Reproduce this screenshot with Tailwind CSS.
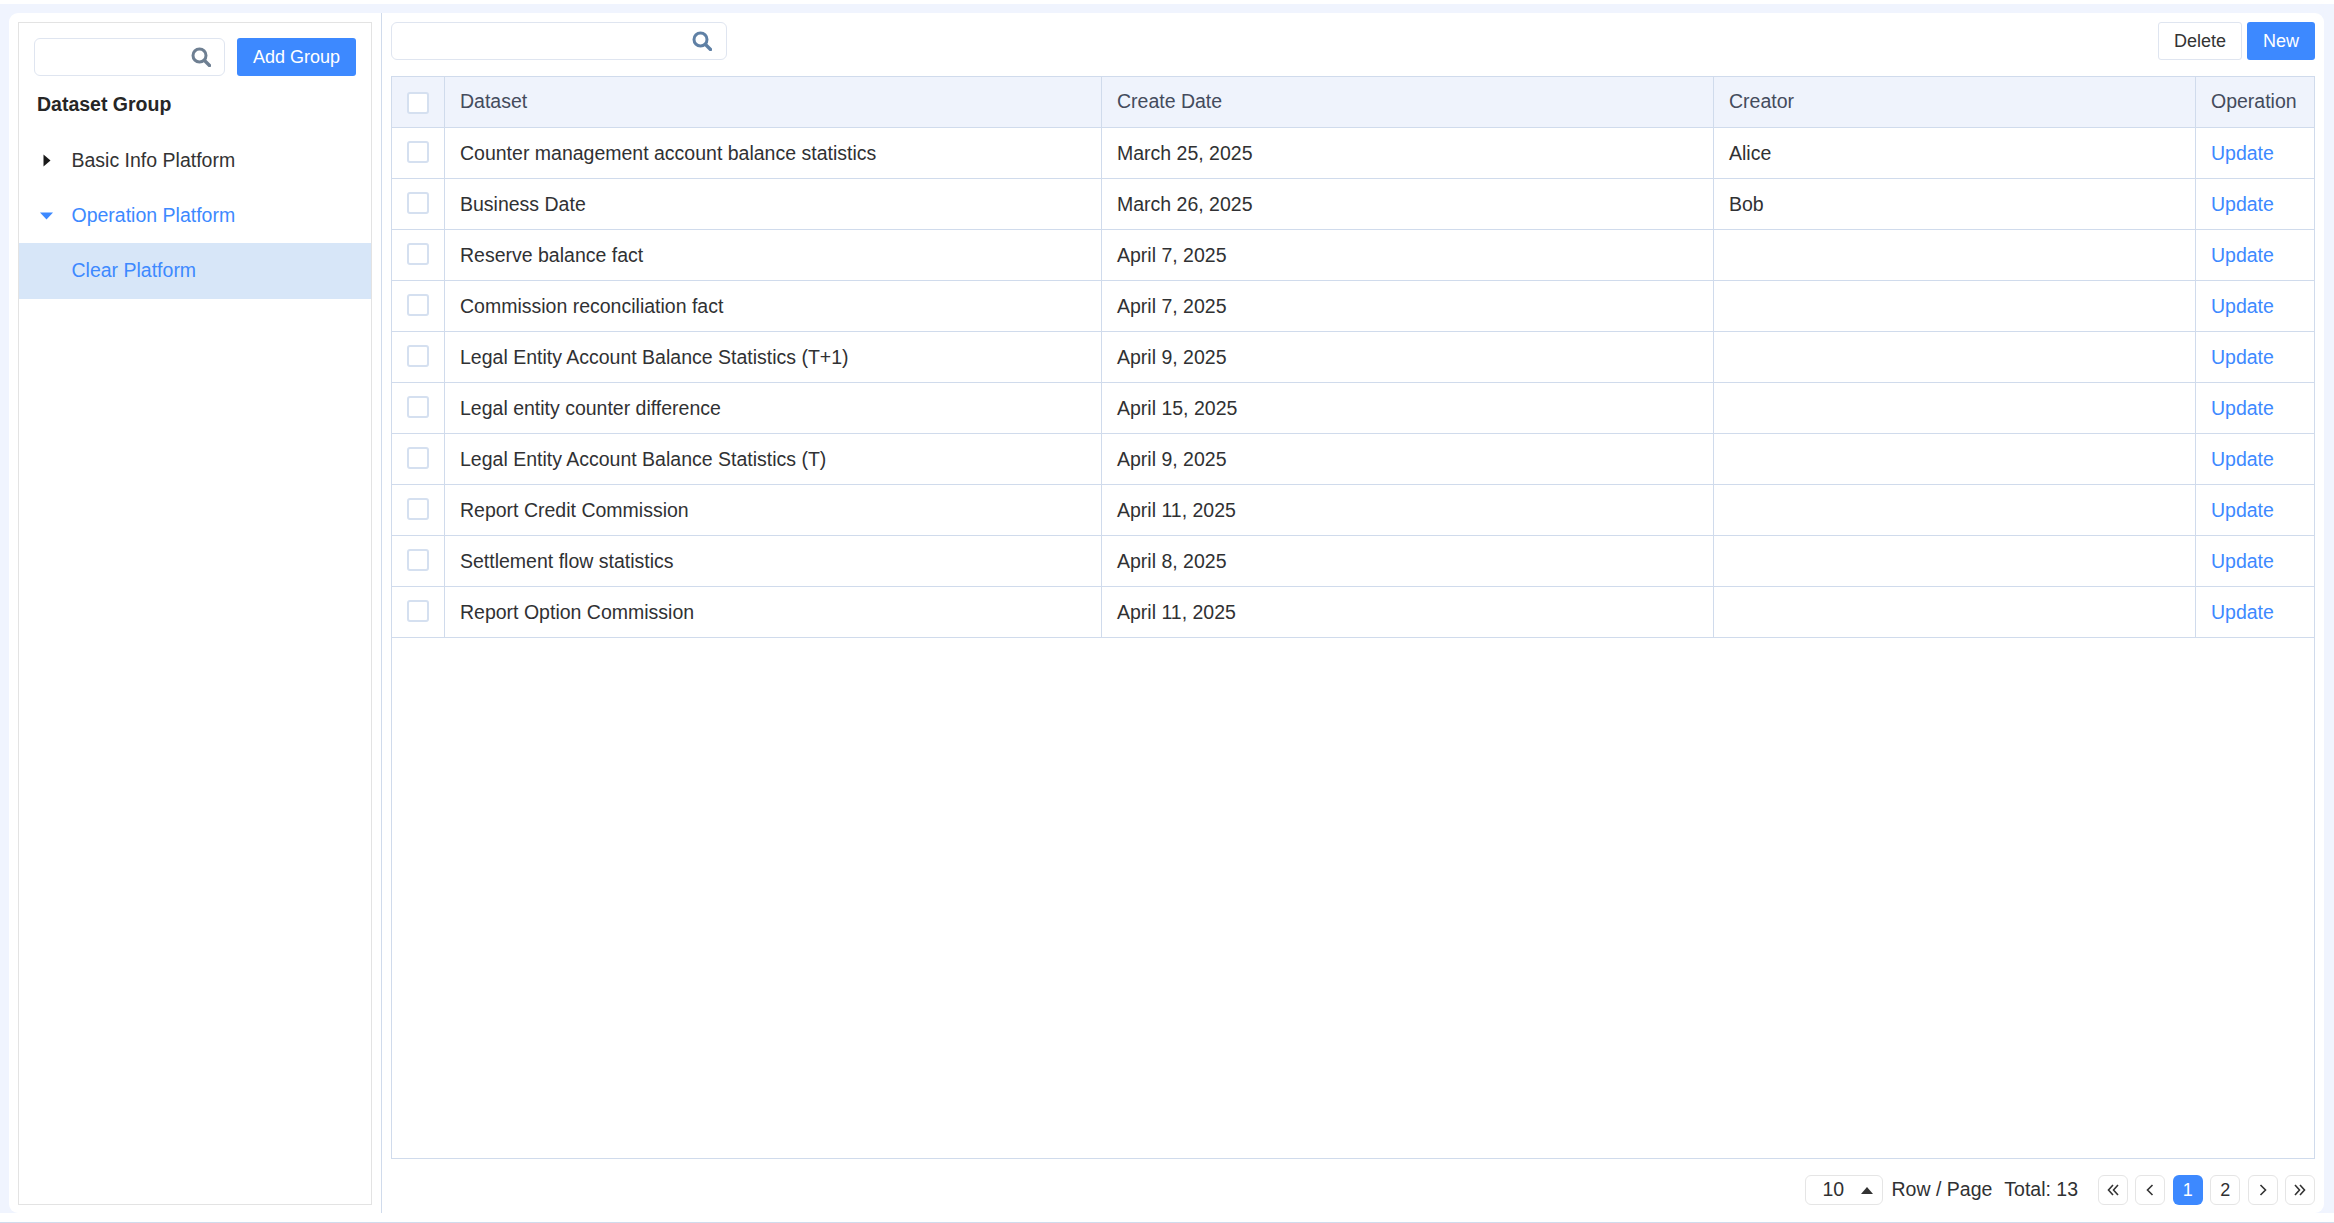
<!DOCTYPE html>
<html lang="en">

<head>
    <meta charset="UTF-8">
    <title>Dataset Group</title>
    <script src="https://cdn.jsdelivr.net/npm/@tailwindcss/browser@4"></script>
</head>

<body class="h-[1223px] overflow-hidden bg-white [font-family:'Liberation_Sans',Arial,sans-serif] text-[19.5px] text-[#303133]">
    <div class="h-[1223px] pt-[4px] border-b border-[#d0dbec]">
        <div class="h-[1209px] bg-[#f0f4fe] pt-[9px] pl-[9px] pr-[10px]">
            <div class="flex h-[1200px] bg-white rounded-[9px]">

                <!-- Left tree -->
                <div class="w-[373px] shrink-0 pt-[9px] pb-[8px] pl-[9px] pr-[9px] border-r border-[#d0dbec]">
                    <div class="h-full border border-[#e3e3e3] pt-[15px]">
                        <div class="flex gap-[12px] pl-[15px]">
                            <div class="w-[191px] h-[38px] border border-[#dfe5f0] rounded-[6px] flex items-center justify-end pr-[13px]">
                                <svg class="w-[20px] h-[20px] text-[#6e7f92]" viewBox="0 0 20 20" fill="none" stroke="currentColor">
                                    <circle cx="8.5" cy="8.5" r="6.5" stroke-width="3" />
                                    <path d="M13.5 13.5 L18.5 18.5" stroke-width="3.4" stroke-linecap="round" />
                                </svg>
                            </div>
                            <button class="w-[119px] h-[38px] bg-[#3d89ff] text-white text-[18px] rounded-[3px]">Add Group</button>
                        </div>
                        <div class="h-[57px] flex items-center pl-[18px] font-bold text-[19.5px] text-[#262626]">Dataset Group</div>

                        <div class="h-[55px] flex items-center pl-[24px] text-[#333]">
                            <svg class="w-[8px] h-[13px]" viewBox="0 0 8 13"><path d="M0.5 0.5 L7.5 6.5 L0.5 12.5 Z" fill="#1a1a1a" /></svg>
                            <span class="ml-[20.5px]">Basic Info Platform</span>
                        </div>
                        <div class="h-[55px] flex items-center pl-[21px] text-[#3d89ff]">
                            <svg class="w-[13px] h-[8px]" viewBox="0 0 13 8"><path d="M0 0.5 L13 0.5 L6.5 7.5 Z" fill="#3d89ff" /></svg>
                            <span class="ml-[18.5px]">Operation Platform</span>
                        </div>
                        <div class="h-[56px] flex items-center pl-[52.5px] bg-[#d7e6f8] text-[#3d89ff]">Clear Platform</div>
                    </div>
                </div>

                <!-- Right content -->
                <div class="flex-1 min-w-0 px-[9px] pt-[9px]">
                    <div class="flex justify-between h-[38px]">
                        <div class="w-[336px] h-[38px] border border-[#dfe5f0] rounded-[6px] flex items-center justify-end pr-[14px]">
                            <svg class="w-[20px] h-[20px] text-[#5f80a5]" viewBox="0 0 20 20" fill="none" stroke="currentColor">
                                <circle cx="8.5" cy="8.5" r="6.5" stroke-width="3" />
                                <path d="M13.5 13.5 L18.5 18.5" stroke-width="3.4" stroke-linecap="round" />
                            </svg>
                        </div>
                        <div class="flex gap-[5px]">
                            <button class="w-[84px] h-[38px] bg-white border border-[#dfe5f0] rounded-[3px] text-[18px] text-[#333]">Delete</button>
                            <button class="w-[68px] h-[38px] bg-[#3d89ff] rounded-[3px] text-[18px] text-white">New</button>
                        </div>
                    </div>

                    <div class="mt-[16px] h-[1083px] border border-[#d0dbec]">
                        <table class="w-full table-fixed border-separate border-spacing-0" id="dataset-table">
                            <colgroup>
                                <col class="w-[53px]">
                                <col class="w-[657px]">
                                <col class="w-[612px]">
                                <col class="w-[482px]">
                                <col class="w-[118px]">
                            </colgroup>
                            <thead class="bg-[#eff3fc] text-[#444b5c] text-left">
                                <tr class="h-[51px]">
                                    <th class="font-normal border-b border-r border-[#d0dbec] pl-[15px] pt-[2px]"><span class="block w-[22px] h-[22px] bg-white border-2 border-[#d5e0f0] rounded-[3px]"></span></th>
                                    <th class="font-normal border-b border-r border-[#d0dbec] pl-[15px] pb-[1px]">Dataset</th>
                                    <th class="font-normal border-b border-r border-[#d0dbec] pl-[15px] pb-[1px]">Create Date</th>
                                    <th class="font-normal border-b border-r border-[#d0dbec] pl-[15px] pb-[1px]">Creator</th>
                                    <th class="font-normal border-b border-[#d0dbec] pl-[15px] pb-[1px]">Operation</th>
                                </tr>
                            </thead>
                            <tbody>
                                <tr class="h-[51px]">
                                    <td class="border-b border-r border-[#d0dbec] pl-[15px] pb-[3px]"><span class="block w-[22px] h-[22px] border-2 border-[#d5e0f0] rounded-[3px]"></span></td>
                                    <td class="border-b border-r border-[#d0dbec] pl-[15px] pt-[2px]">Counter management account balance statistics</td>
                                    <td class="border-b border-r border-[#d0dbec] pl-[15px] pt-[2px]">March 25, 2025</td>
                                    <td class="border-b border-r border-[#d0dbec] pl-[15px] pt-[2px]">Alice</td>
                                    <td class="border-b border-[#d0dbec] pl-[15px] pt-[2px] text-[#3d89ff]">Update</td>
                                </tr>
                                <tr class="h-[51px]">
                                    <td class="border-b border-r border-[#d0dbec] pl-[15px] pb-[3px]"><span class="block w-[22px] h-[22px] border-2 border-[#d5e0f0] rounded-[3px]"></span></td>
                                    <td class="border-b border-r border-[#d0dbec] pl-[15px] pt-[2px]">Business Date</td>
                                    <td class="border-b border-r border-[#d0dbec] pl-[15px] pt-[2px]">March 26, 2025</td>
                                    <td class="border-b border-r border-[#d0dbec] pl-[15px] pt-[2px]">Bob</td>
                                    <td class="border-b border-[#d0dbec] pl-[15px] pt-[2px] text-[#3d89ff]">Update</td>
                                </tr>
                                <tr class="h-[51px]">
                                    <td class="border-b border-r border-[#d0dbec] pl-[15px] pb-[3px]"><span class="block w-[22px] h-[22px] border-2 border-[#d5e0f0] rounded-[3px]"></span></td>
                                    <td class="border-b border-r border-[#d0dbec] pl-[15px] pt-[2px]">Reserve balance fact</td>
                                    <td class="border-b border-r border-[#d0dbec] pl-[15px] pt-[2px]">April 7, 2025</td>
                                    <td class="border-b border-r border-[#d0dbec] pl-[15px] pt-[2px]"></td>
                                    <td class="border-b border-[#d0dbec] pl-[15px] pt-[2px] text-[#3d89ff]">Update</td>
                                </tr>
                                <tr class="h-[51px]">
                                    <td class="border-b border-r border-[#d0dbec] pl-[15px] pb-[3px]"><span class="block w-[22px] h-[22px] border-2 border-[#d5e0f0] rounded-[3px]"></span></td>
                                    <td class="border-b border-r border-[#d0dbec] pl-[15px] pt-[2px]">Commission reconciliation fact</td>
                                    <td class="border-b border-r border-[#d0dbec] pl-[15px] pt-[2px]">April 7, 2025</td>
                                    <td class="border-b border-r border-[#d0dbec] pl-[15px] pt-[2px]"></td>
                                    <td class="border-b border-[#d0dbec] pl-[15px] pt-[2px] text-[#3d89ff]">Update</td>
                                </tr>
                                <tr class="h-[51px]">
                                    <td class="border-b border-r border-[#d0dbec] pl-[15px] pb-[3px]"><span class="block w-[22px] h-[22px] border-2 border-[#d5e0f0] rounded-[3px]"></span></td>
                                    <td class="border-b border-r border-[#d0dbec] pl-[15px] pt-[2px]">Legal Entity Account Balance Statistics (T+1)</td>
                                    <td class="border-b border-r border-[#d0dbec] pl-[15px] pt-[2px]">April 9, 2025</td>
                                    <td class="border-b border-r border-[#d0dbec] pl-[15px] pt-[2px]"></td>
                                    <td class="border-b border-[#d0dbec] pl-[15px] pt-[2px] text-[#3d89ff]">Update</td>
                                </tr>
                                <tr class="h-[51px]">
                                    <td class="border-b border-r border-[#d0dbec] pl-[15px] pb-[3px]"><span class="block w-[22px] h-[22px] border-2 border-[#d5e0f0] rounded-[3px]"></span></td>
                                    <td class="border-b border-r border-[#d0dbec] pl-[15px] pt-[2px]">Legal entity counter difference</td>
                                    <td class="border-b border-r border-[#d0dbec] pl-[15px] pt-[2px]">April 15, 2025</td>
                                    <td class="border-b border-r border-[#d0dbec] pl-[15px] pt-[2px]"></td>
                                    <td class="border-b border-[#d0dbec] pl-[15px] pt-[2px] text-[#3d89ff]">Update</td>
                                </tr>
                                <tr class="h-[51px]">
                                    <td class="border-b border-r border-[#d0dbec] pl-[15px] pb-[3px]"><span class="block w-[22px] h-[22px] border-2 border-[#d5e0f0] rounded-[3px]"></span></td>
                                    <td class="border-b border-r border-[#d0dbec] pl-[15px] pt-[2px]">Legal Entity Account Balance Statistics (T)</td>
                                    <td class="border-b border-r border-[#d0dbec] pl-[15px] pt-[2px]">April 9, 2025</td>
                                    <td class="border-b border-r border-[#d0dbec] pl-[15px] pt-[2px]"></td>
                                    <td class="border-b border-[#d0dbec] pl-[15px] pt-[2px] text-[#3d89ff]">Update</td>
                                </tr>
                                <tr class="h-[51px]">
                                    <td class="border-b border-r border-[#d0dbec] pl-[15px] pb-[3px]"><span class="block w-[22px] h-[22px] border-2 border-[#d5e0f0] rounded-[3px]"></span></td>
                                    <td class="border-b border-r border-[#d0dbec] pl-[15px] pt-[2px]">Report Credit Commission</td>
                                    <td class="border-b border-r border-[#d0dbec] pl-[15px] pt-[2px]">April 11, 2025</td>
                                    <td class="border-b border-r border-[#d0dbec] pl-[15px] pt-[2px]"></td>
                                    <td class="border-b border-[#d0dbec] pl-[15px] pt-[2px] text-[#3d89ff]">Update</td>
                                </tr>
                                <tr class="h-[51px]">
                                    <td class="border-b border-r border-[#d0dbec] pl-[15px] pb-[3px]"><span class="block w-[22px] h-[22px] border-2 border-[#d5e0f0] rounded-[3px]"></span></td>
                                    <td class="border-b border-r border-[#d0dbec] pl-[15px] pt-[2px]">Settlement flow statistics</td>
                                    <td class="border-b border-r border-[#d0dbec] pl-[15px] pt-[2px]">April 8, 2025</td>
                                    <td class="border-b border-r border-[#d0dbec] pl-[15px] pt-[2px]"></td>
                                    <td class="border-b border-[#d0dbec] pl-[15px] pt-[2px] text-[#3d89ff]">Update</td>
                                </tr>
                                <tr class="h-[51px]">
                                    <td class="border-b border-r border-[#d0dbec] pl-[15px] pb-[3px]"><span class="block w-[22px] h-[22px] border-2 border-[#d5e0f0] rounded-[3px]"></span></td>
                                    <td class="border-b border-r border-[#d0dbec] pl-[15px] pt-[2px]">Report Option Commission</td>
                                    <td class="border-b border-r border-[#d0dbec] pl-[15px] pt-[2px]">April 11, 2025</td>
                                    <td class="border-b border-r border-[#d0dbec] pl-[15px] pt-[2px]"></td>
                                    <td class="border-b border-[#d0dbec] pl-[15px] pt-[2px] text-[#3d89ff]">Update</td>
                                </tr>
                            </tbody>
                        </table>
                    </div>

                    <!-- Pagination -->
                    <div class="mt-[16px] flex justify-end items-center h-[30px]">
                        <div class="w-[78px] h-[30px] border border-[#e5e5e5] rounded-[6px] flex items-center pl-[17px]">
                            <span>10</span>
                            <svg class="ml-[17px] w-[12px] h-[7px]" viewBox="0 0 12 7"><path d="M0 7 L6 0 L12 7 Z" fill="#333" /></svg>
                        </div>
                        <span class="ml-[9px]">Row / Page</span>
                        <span class="ml-[12px]">Total: 13</span>
                        <div class="ml-[20px] flex gap-[7.4px] text-[18px]">
                            <button class="w-[30px] h-[30px] border border-[#e5e5e5] rounded-[6px] flex items-center justify-center">
                                <svg class="w-[12px] h-[12px]" viewBox="0 0 12 12" fill="none" stroke="#333" stroke-width="1.6"><path d="M6 1 L1.5 6 L6 11 M11 1 L6.5 6 L11 11" /></svg>
                            </button>
                            <button class="w-[30px] h-[30px] border border-[#e5e5e5] rounded-[6px] flex items-center justify-center">
                                <svg class="w-[12px] h-[12px]" viewBox="0 0 12 12" fill="none" stroke="#333" stroke-width="1.6"><path d="M8.5 1 L3.5 6 L8.5 11" /></svg>
                            </button>
                            <button class="w-[30px] h-[30px] bg-[#3d89ff] text-white rounded-[6px]">1</button>
                            <button class="w-[30px] h-[30px] border border-[#e5e5e5] rounded-[6px]">2</button>
                            <button class="w-[30px] h-[30px] border border-[#e5e5e5] rounded-[6px] flex items-center justify-center">
                                <svg class="w-[12px] h-[12px]" viewBox="0 0 12 12" fill="none" stroke="#333" stroke-width="1.6"><path d="M3.5 1 L8.5 6 L3.5 11" /></svg>
                            </button>
                            <button class="w-[30px] h-[30px] border border-[#e5e5e5] rounded-[6px] flex items-center justify-center">
                                <svg class="w-[12px] h-[12px]" viewBox="0 0 12 12" fill="none" stroke="#333" stroke-width="1.6"><path d="M1 1 L5.5 6 L1 11 M6 1 L10.5 6 L6 11" /></svg>
                            </button>
                        </div>
                    </div>
                </div>
            </div>
        </div>
    </div>
</body>

</html>
